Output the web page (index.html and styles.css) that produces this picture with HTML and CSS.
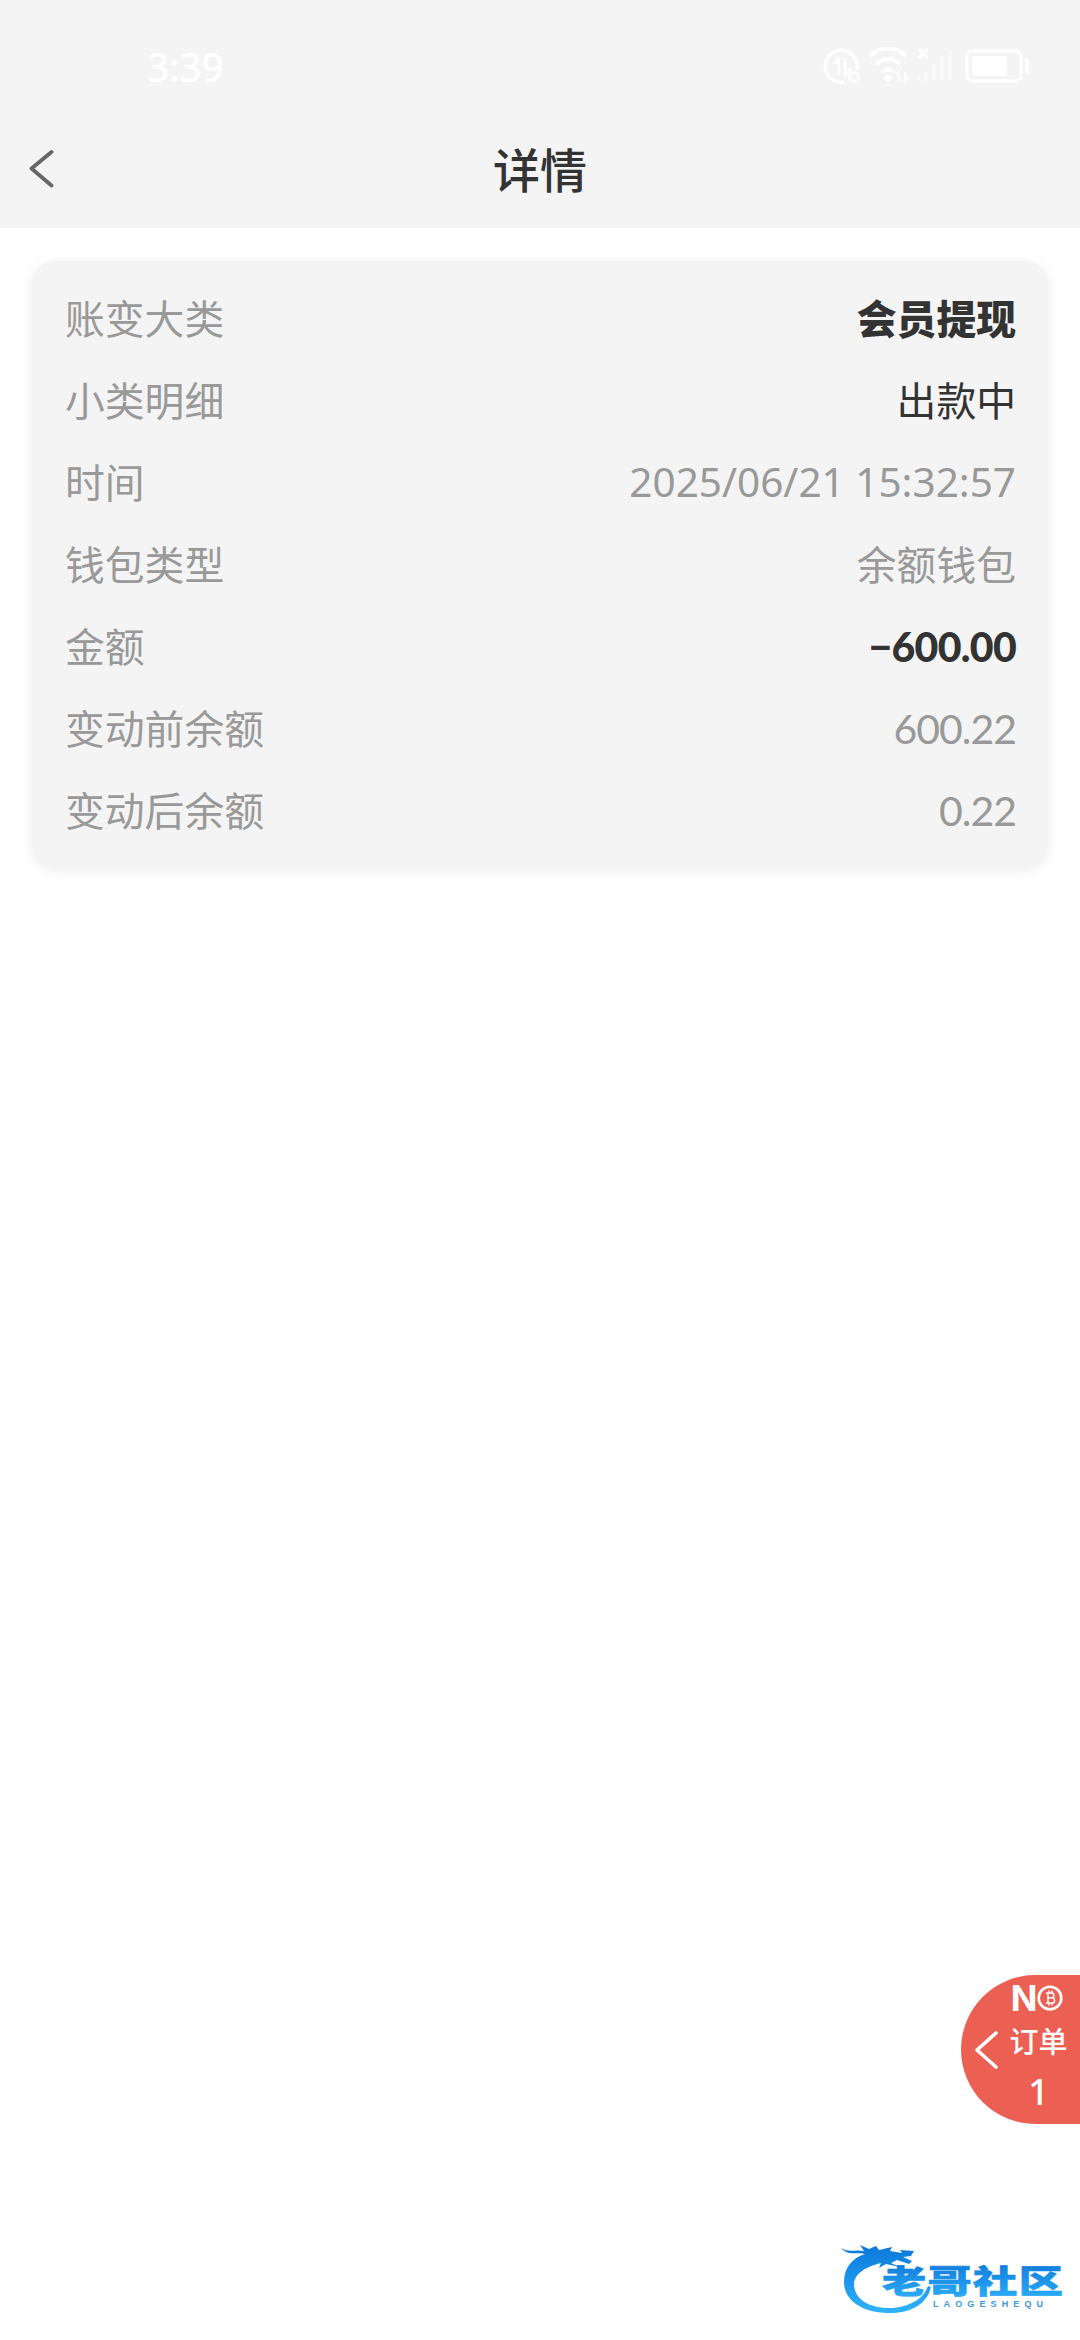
FILE: index.html
```html
<!DOCTYPE html>
<html lang="zh-CN">
<head>
<meta charset="utf-8">
<title>详情</title>
<link rel="stylesheet" href="styles.css">
</head>
<body>
<header class="top">
  <div class="status">
    <span class="clock">3:39</span>
    <svg class="status-icons" width="210" height="40" viewBox="0 0 210 40" fill="none" stroke="#fff">
      <path d="M36 22A16 16 0 1 0 23 35" stroke-width="3.4"/>
      <path d="M18 11v17M18 11l-5 6M24 11v17l6-6" stroke-width="2.8"/>
      <circle cx="33" cy="30" r="4.5" stroke-width="3"/>
      <path d="M49 9a25 25 0 0 1 36 0M55 17a17 17 0 0 1 24 0M61 25a9 9 0 0 1 12 0" stroke-width="4"/>
      <circle cx="67" cy="31" r="3.6" fill="#fff" stroke="none"/>
      <path d="M78 34V25l-3 3M84 25v9l4-4" stroke-width="2"/>
      <path d="M98 2l9 9M107 2l-9 9" stroke-width="3"/>
      <path d="M98 34v-5M105 34V24M113 34V17M121 34V9M129 34V3" stroke-width="3.4" opacity=".45"/>
      <rect x="146" y="4" width="54" height="30" rx="6" stroke-width="3"/>
      <rect x="151" y="9" width="35" height="20" rx="3" fill="#fff" stroke="none"/>
      <path d="M206 13v11" stroke-width="4" stroke-linecap="round"/>
    </svg>
  </div>
  <div class="nav">
    <svg class="back" width="26" height="42" viewBox="0 0 26 42" fill="none" stroke="#666" stroke-width="3.8" stroke-linecap="round" stroke-linejoin="round"><path d="M22.500 4L2.500 20.500L22.500 37.500"/></svg>
    <h1 class="title">详情</h1>
  </div>
</header>
<main class="card">
  <div class="row"><span>账变大类</span><span class="value strong">会员提现</span></div>
  <div class="row"><span>小类明细</span><span class="value dark">出款中</span></div>
  <div class="row"><span>时间</span><span class="value date">2025/06/21 15:32:57</span></div>
  <div class="row"><span>钱包类型</span><span class="value">余额钱包</span></div>
  <div class="row"><span>金额</span><span class="value amount strong">−600.00</span></div>
  <div class="row"><span>变动前余额</span><span class="value amount">600.22</span></div>
  <div class="row"><span>变动后余额</span><span class="value amount">0.22</span></div>
</main>
<aside class="orders">
  <svg class="orders-arrow" width="26" height="40" viewBox="0 0 26 40" fill="none" stroke="#fff" stroke-width="3.6" stroke-linecap="round" stroke-linejoin="round"><path d="M22 3L3 20L22 37"/></svg>
  <div class="orders-body">
    <div class="brand">N<svg width="26" height="26" viewBox="0 0 26 26" fill="none" stroke="#fff"><circle cx="13" cy="13" r="11.300" stroke-width="2.600"/><path d="M9 8h5.500a2.400 2.400 0 0 1 0 4.800H11h4a2.600 2.600 0 0 1 0 5.200H9M11 8v10M12 5.500V8M15 5.500V8M12 18v2.500M15 18v2.500" stroke-width="1.500"/></svg></div>
    <div class="orders-label">订单</div>
    <div class="orders-count">1</div>
  </div>
</aside>
<svg class="watermark" width="260" height="120" viewBox="0 0 260 120">
  <defs>
    <linearGradient id="blue" gradientUnits="userSpaceOnUse" x1="0" y1="25" x2="0" y2="93"><stop offset="0" stop-color="#0b78d8"/><stop offset=".5" stop-color="#1c94ee"/><stop offset="1" stop-color="#2eb4f8"/></linearGradient>
    <linearGradient id="ink" x1="0" y1="0" x2="0" y2="1"><stop offset=".2" stop-color="#127edd"/><stop offset="1" stop-color="#2db2fa"/></linearGradient>
  </defs>
  <path fill="url(#blue)" d="M21 28C29 33 35 29 44 31L40 25L49 29L56 26L59 30L72 27L70 31L82 33L80 30L94 31L91 36L83 37L92 41L89 44L77 40L71 43L80 47L66 44L59 48L61 43C45 47 34 54 34 65C35 81 52 89 73 88C92 86 104 78 108 66L111 67C107 84 92 92 73 93C45 94 24 82 24 62C24 48 32 38 45 34C35 32 28 36 21 28Z"/>
  <text class="wm-name" transform="translate(62 73) scale(1.380 1)" x="0" y="0" textLength="131" fill="url(#ink)" stroke="url(#ink)" stroke-width=".7">老哥社区</text>
  <text class="wm-latin" x="113" y="86.500" textLength="110" fill="#3c98e0">LAOGESHEQU</text>
</svg>
</body>
</html>
```
FILE: styles.css
```css
* { box-sizing: border-box; }
body {
  margin: 0;
  height: 2340px;
  background: #fff;
  color: #999;
  font-family: "Noto Sans CJK SC", sans-serif;
  overflow: hidden;
}
.top { height: 228px; background: #f4f4f4; }
.status {
  height: 112px;
  padding: 21px 49px 0 147px;
  display: flex;
  justify-content: space-between;
  align-items: center;
  color: #fff;
}
.clock { font: 500 39px/44px "Noto Sans", sans-serif; letter-spacing: -.2px; }
.nav {
  height: 116px;
  padding: 0 29px;
  display: grid;
  grid-template-columns: 26px 1fr 26px;
  align-items: center;
}
.back { margin-bottom: 2px; }
.title {
  margin: 0;
  padding-bottom: 4px;
  text-align: center;
  font-size: 47px;
  line-height: 70px;
  font-weight: 500;
  color: #333;
}
.card {
  margin: 33px 32px 0;
  padding: 16px 32px 16px 33px;
  border-radius: 24px;
  background: #f4f4f4;
  box-shadow: 0 3px 14px rgba(0, 0, 0, .08);
}
.row {
  height: 82px;
  padding-bottom: 3px;
  display: flex;
  justify-content: space-between;
  align-items: center;
  font-size: 39.8px;
  line-height: 60px;
}
.dark { color: #333; }
.strong { color: #333; font-weight: 900; }
.date { padding-top: 3px; font-family: "Noto Sans", sans-serif; font-size: 40.5px; }
.amount { padding-top: 4px; font-family: Lato, sans-serif; font-size: 41px; letter-spacing: -1px; }
.amount.strong { letter-spacing: -.7px; }
.orders {
  position: absolute;
  top: 1975px;
  right: 0;
  width: 119px;
  height: 149px;
  padding-left: 13px;
  display: flex;
  align-items: center;
  border-radius: 75px 0 0 75px;
  background: #ec6053;
  color: #fff;
}
.orders-body {
  flex: 1;
  height: 149px;
  padding-right: 3px;
  display: flex;
  flex-direction: column;
  align-items: center;
}
.brand {
  height: 46px;
  margin-left: -3px;
  display: flex;
  align-items: center;
  font: 700 35px/46px Inter, sans-serif;
}
.orders-label { font-size: 29px; line-height: 39px; font-weight: 500; }
.orders-count { font: 500 36px/64px "Noto Sans", sans-serif; }
.watermark { position: absolute; left: 820px; top: 2220px; }
.wm-name { font: 900 32px "Noto Sans CJK SC", sans-serif; }
.wm-latin { font: 700 9px "Liberation Sans", sans-serif; }
```
